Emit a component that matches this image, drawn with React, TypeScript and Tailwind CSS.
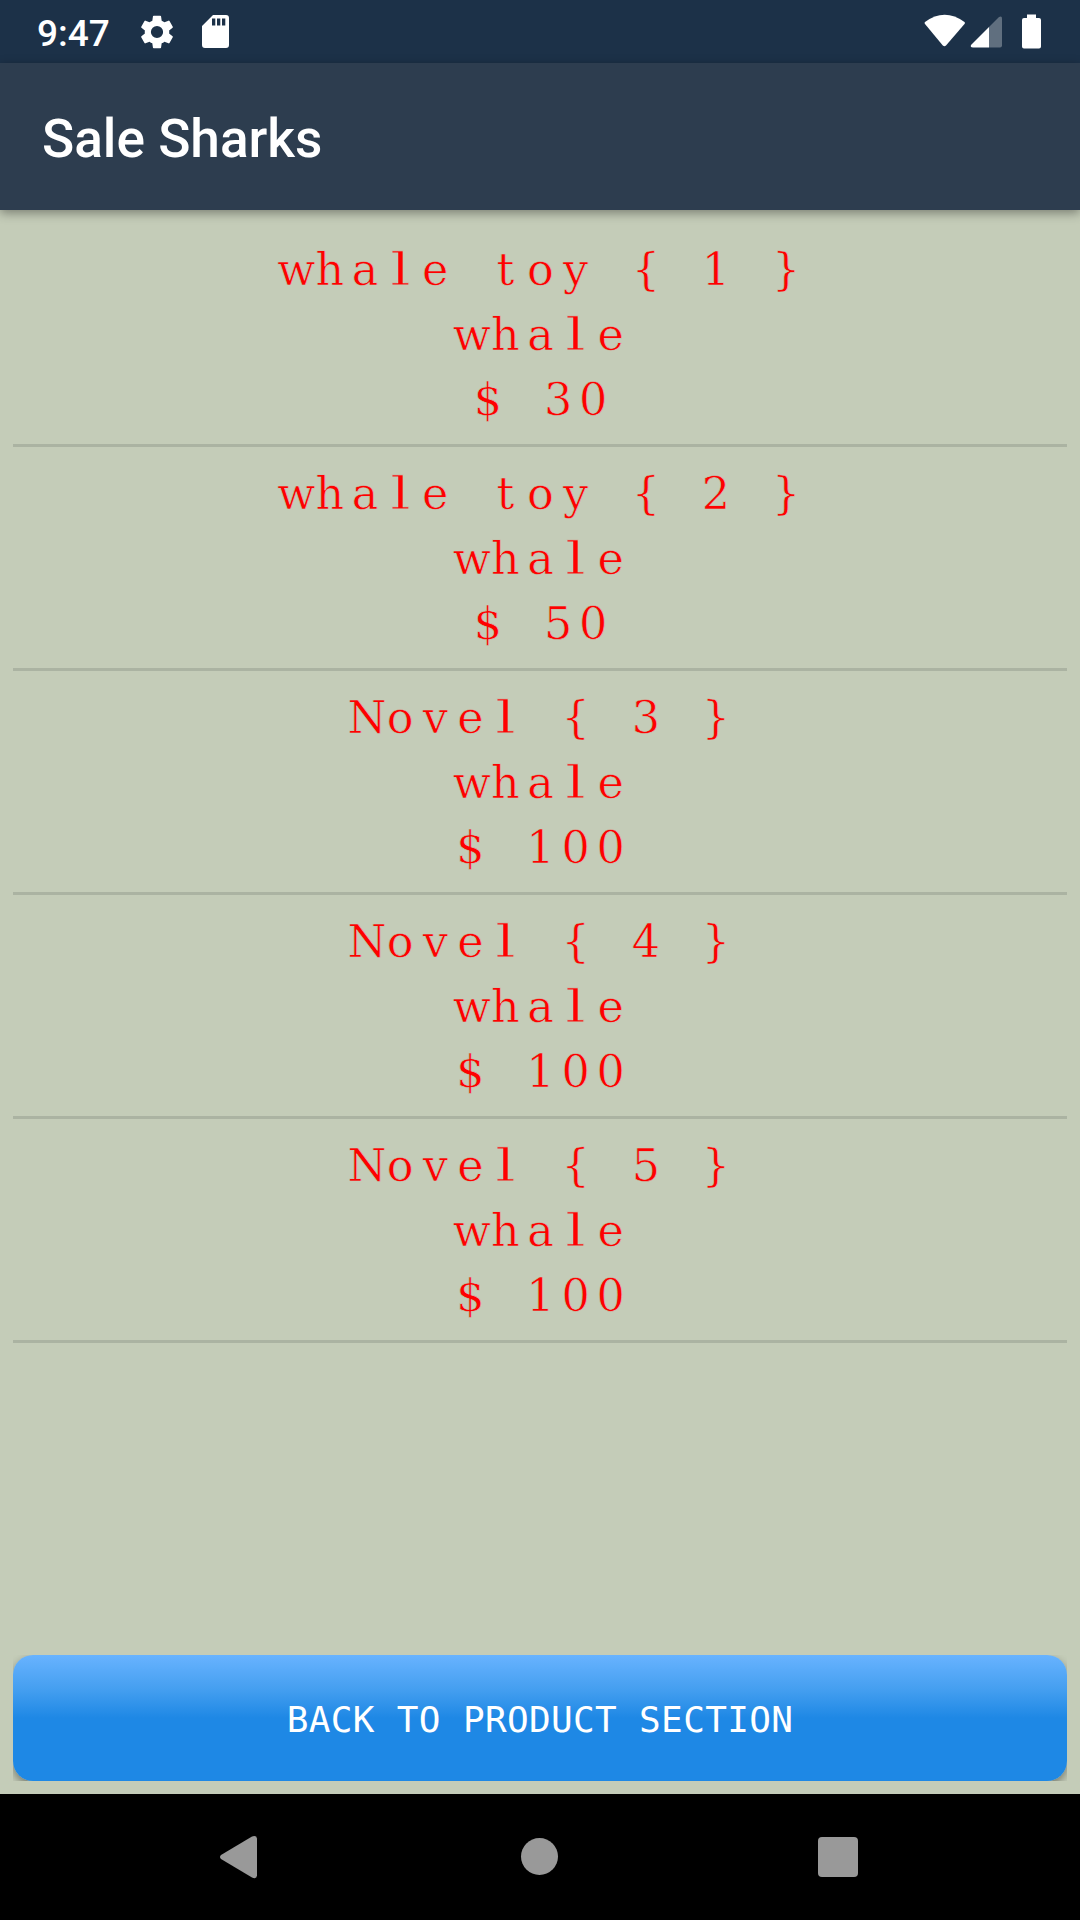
import React from "react";

const products = [
  { name: "whale toy", id: 1, owner: "whale", price: 30 },
  { name: "whale toy", id: 2, owner: "whale", price: 50 },
  { name: "Novel", id: 3, owner: "whale", price: 100 },
  { name: "Novel", id: 4, owner: "whale", price: 100 },
  { name: "Novel", id: 5, owner: "whale", price: 100 },
];

// Typewriter line: every character sits in an equally wide cell.
function Line({ text }: { text: string }) {
  return (
    <p className="h-[65px] whitespace-pre pl-px text-center font-['DejaVu_Serif',serif] text-[44.5px] leading-[67px] text-[#ff0000] [-webkit-text-stroke:0.6px_#c4ccb8]">
      {text.split("").map((c, i) => (
        <span
          key={i}
          className={
            c === "l"
              ? "inline-block w-[35.1px] scale-x-150 text-center [-webkit-text-stroke:1px_#c4ccb8]"
              : "inline-block w-[35.1px] text-center"
          }
        >
          {c}
        </span>
      ))}
    </p>
  );
}

export default function App() {
  return (
    <div className="flex h-[1920px] w-[1080px] flex-col overflow-hidden bg-[#c4ccb8] font-['Roboto',sans-serif]">
      <div className="flex h-[63px] shrink-0 items-center bg-[#1c3148] text-white">
        <span className="ml-[37px] mt-[4px] w-[103px] text-[37px] font-medium leading-none">9:47</span>
        <svg className="h-[34px] w-[34px]" viewBox="2 2 20 20" fill="currentColor">
          <path d="M19.14 12.94c.04-.3.06-.61.06-.94 0-.32-.02-.64-.07-.94l2.03-1.58a.49.49 0 0 0 .12-.61l-1.92-3.32a.49.49 0 0 0-.59-.22l-2.39.96a7 7 0 0 0-1.62-.94l-.36-2.54a.48.48 0 0 0-.48-.41h-3.84a.47.47 0 0 0-.47.41l-.36 2.54c-.59.24-1.13.57-1.62.94l-2.39-.96a.48.48 0 0 0-.59.22L2.74 8.87a.47.47 0 0 0 .12.61l2.03 1.58c-.05.3-.09.63-.09.94s.02.64.07.94l-2.03 1.58a.49.49 0 0 0-.12.61l1.92 3.32c.12.22.37.29.59.22l2.39-.96c.5.38 1.03.7 1.62.94l.36 2.54c.05.24.24.41.48.41h3.84c.24 0 .44-.17.47-.41l.36-2.54c.59-.24 1.13-.56 1.62-.94l2.39.96c.22.08.47 0 .59-.22l1.92-3.32a.47.47 0 0 0-.12-.61zM12 15.6a3.6 3.6 0 1 1 0-7.2 3.6 3.6 0 0 1 0 7.2z" />
        </svg>
        <svg className="ml-[28px] h-[33px] w-[27px]" viewBox="0 0 27 33" fill="currentColor">
          <path fillRule="evenodd" d="M11 0H24q3 0 3 3V30q0 3-3 3H3q-3 0-3-3V11zM10 3.5V10.5h3.3V3.5zM15 3.5V10.5h3.3V3.5zM20 3.5V10.5h3.3V3.5z" />
        </svg>
        <svg className="ml-auto mr-[38px] h-[36px] w-[120px]" viewBox="922 13.5 120 36" fill="currentColor">
          <path d="M925 21.500q19.500-14.500 39.500 0q.8 1 0 2L946 45q-1.600 1.500-3.200 0L925 23.500q-.8-1 0-2z" />
          <path d="M989 26.500L999 16.500q3-1.500 3 1.500V45q0 2-2 2H989z" opacity=".3" />
          <path d="M971 44.500L989 26.500V47H973q-3 0-2-2.500z" />
          <path d="M1027 14h9v3.500h3q2 0 2 2V46q0 2-2 2h-15q-2 0-2-2V19.500q0-2 2-2h3z" />
        </svg>
      </div>
      <header className="z-10 flex h-[147px] shrink-0 items-center bg-[#2d3d4f] px-[42px] pt-[6px] shadow-[0_3px_10px_rgba(0,0,0,0.38)]">
        <h1 className="text-[53.2px] font-medium leading-none text-white">Sale Sharks</h1>
      </header>
      <main className="flex flex-1 flex-col p-[13px]">
        <ul>
          {products.map((p) => (
            <li key={p.id} className="h-[224px] border-b-[3px] border-[#abb3a2] pt-[13px]">
              <Line text={`${p.name} { ${p.id} }`} />
              <Line text={p.owner} />
              <Line text={`$ ${p.price}`} />
            </li>
          ))}
        </ul>
        <div className="mt-auto overflow-hidden">
          <button className="flex h-[126px] w-full items-center justify-center rounded-[20px] bg-[linear-gradient(180deg,#68b3ff_0%,#459ff0_27%,#1e88e5_50%,#1e88e5_100%)] pt-[3px] shadow-[0_4px_8px_rgba(0,0,0,0.4)]">
            <span className="font-['DejaVu_Sans_Mono',monospace] text-[36px] tracking-[0.35px] text-white">BACK TO PRODUCT SECTION</span>
          </button>
        </div>
      </main>
      <nav className="flex h-[126px] shrink-0 bg-black">
        <svg className="h-full w-full" viewBox="0 0 1080 126" fill="#999">
          <path d="M221 61L252 42.500q4.500-1.500 5 2V81.500q-.5 4-5 2L221 65q-2-2 0-4z" />
          <circle cx="539.500" cy="62.500" r="18.500" />
          <rect x="818" y="43" width="40" height="40" rx="4" />
        </svg>
      </nav>
    </div>
  );
}
